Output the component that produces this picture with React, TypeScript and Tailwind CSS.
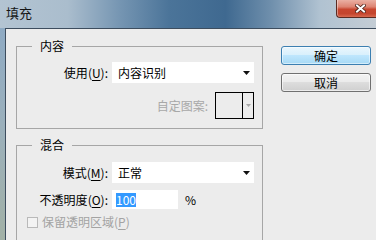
const font = "font-['Noto_Sans_CJK_SC','Noto_Sans',sans-serif]";

function Arrow() {
  return (
    <svg width="7" height="4" viewBox="0 0 7 4" className="shrink-0">
      <path d="M0 0h7L3.5 4z" fill="#111" />
    </svg>
  );
}

function Select({ value }: { value: string }) {
  return (
    <div className="ml-[4px] w-[142px] h-[21px] bg-white flex items-center pl-[6px] pr-[4px]">
      <span className="flex-1 leading-[16px]">{value}</span>
      <Arrow />
    </div>
  );
}

function Label({ text, k }: { text: string; k: string }) {
  return (
    <span className="w-[91px] shrink-0 text-right leading-[16px]">
      {text}(<span className="underline underline-offset-2">{k}</span>):
    </span>
  );
}

function CloseButton() {
  return (
    <div className="w-[40px] h-[18px] shrink-0 rounded-bl-[4px] border-l border-b border-[#5b2b22] bg-[linear-gradient(180deg,#eab0a3_0%,#dd8472_40%,#c7462f_55%,#c4452e_80%,#d8694f_100%)] shadow-[inset_1px_0_0_rgba(255,255,255,0.4)] flex items-center pl-[18px]">
      <svg width="11" height="9" viewBox="0 0 11 9">
        <path d="M2 1.5l7 6M9 1.5l-7 6" stroke="#4a2018" strokeWidth="3.6" strokeLinecap="square" />
        <path d="M2 1.5l7 6M9 1.5l-7 6" stroke="#fff" strokeWidth="2" strokeLinecap="square" />
      </svg>
    </div>
  );
}

export default function App() {
  return (
    <div
      className={`w-[376px] h-[240px] overflow-hidden flex flex-col text-[12px] text-black ${font} bg-[linear-gradient(90deg,#b3c4d2_0%,#aabdcd_18%,#7595b2_32%,#4b7499_45%,#3f6990_60%,#6f8fac_72%,#b0c2d1_85%,#c4cdd5_100%)]`}
    >
      <div className="h-[28px] shrink-0 flex items-start justify-between">
        <span className="pl-[6px] pt-[5px] text-[13px] leading-[16px] text-[#151515]">填充</span>
        <CloseButton />
      </div>
      <div className="flex flex-1 min-h-0">
        <div className="w-[5px] shrink-0 bg-[linear-gradient(180deg,#8eaac3_0%,#9bb0bc_45%,#a2b1a6_100%)]" />
        <div className="flex-1 bg-[#ececec] border-l border-t border-[#3d4d5e] flex">
          <div className="ml-[10px] w-[247px] shrink-0">
            <fieldset className="mt-[9px] border border-[#a6a6a6] pb-[9px]">
              <legend className="ml-[15px] px-[8px] leading-[16px]">内容</legend>
              <div className="mt-[8px] flex items-center">
                <Label text="使用" k="U" />
                <Select value="内容识别" />
              </div>
              <div className="mt-[9px] flex items-center justify-end pr-[8px]">
                <span className="text-[#a8a8a8] leading-[16px]">自定图案:</span>
                <div className="ml-[7px] w-[39px] h-[27px] border border-black flex">
                  <div className="flex-1" />
                  <div className="w-[11px] border-l border-black flex items-center justify-center">
                    <svg width="5" height="3" viewBox="0 0 5 3">
                      <path d="M0 0h5L2.5 3z" fill="#a8a8a8" />
                    </svg>
                  </div>
                </div>
              </div>
            </fieldset>
            <fieldset className="mt-[8px] border border-[#a6a6a6] pb-[20px]">
              <legend className="ml-[15px] px-[8px] leading-[16px]">混合</legend>
              <div className="mt-[9px] flex items-center">
                <Label text="模式" k="M" />
                <Select value="正常" />
              </div>
              <div className="mt-[7px] flex items-center">
                <Label text="不透明度" k="O" />
                <div className="ml-[4px] w-[66px] h-[19px] bg-white flex items-center pl-[4px]">
                  <span className="bg-[#3399ff] text-white leading-[14px] h-[14px]">100</span>
                </div>
                <span className="ml-[7px] leading-[16px]">%</span>
              </div>
              <div className="mt-[5px] flex items-center pl-[10px]">
                <div className="w-[11px] h-[11px] border border-[#b9b9b9] bg-[#f3f3f3]" />
                <span className="ml-[4px] text-[#a3a3a3] leading-[16px]">
                  保留透明区域(<span className="underline underline-offset-2">P</span>)
                </span>
              </div>
            </fieldset>
          </div>
          <div className="ml-[18px] w-[90px] shrink-0 flex flex-col">
            <button className="mt-[17px] h-[19px] rounded-[3px] border border-[#3c7fb1] bg-[linear-gradient(180deg,#eaf6fd_0%,#d9f0fc_45%,#bee6fd_50%,#a7d9f5_100%)] shadow-[inset_0_0_0_1px_rgba(255,255,255,0.5)] leading-[16px] text-black">
              确定
            </button>
            <button className="mt-[8px] h-[19px] rounded-[3px] border border-[#707070] bg-[linear-gradient(180deg,#f2f2f2_0%,#ebebeb_45%,#dddddd_50%,#cfcfcf_100%)] shadow-[inset_0_0_0_1px_rgba(255,255,255,0.6)] leading-[16px] text-black">
              取消
            </button>
          </div>
        </div>
      </div>
    </div>
  );
}
